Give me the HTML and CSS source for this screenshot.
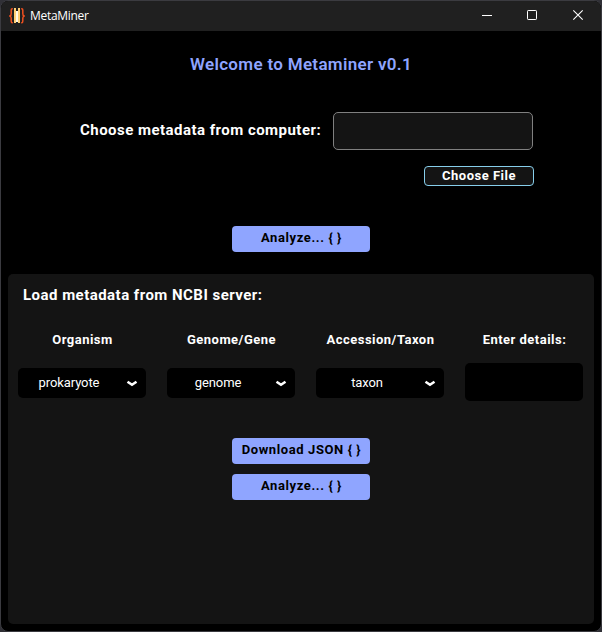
FILE: index.html
```html
<!DOCTYPE html>
<html lang="en">
<head>
<meta charset="utf-8">
<title>MetaMiner</title>
<link rel="stylesheet" href="styles.css">
</head>
<body>
<div class="window">
  <header class="titlebar">
    <svg class="logo" width="16" height="18" viewBox="0 0 16 18">
      <path d="M3.800 1.700H3.300Q2.200 1.700 2.200 3v3.500Q2.200 8.500 1 9 2.200 9.500 2.200 11.500V14q0 1.800 1.100 1.800h.5M12.200 1.700h.5Q13.800 1.700 13.800 3v3.500Q13.800 8.500 15 9 13.800 9.500 13.800 11.500V14q0 1.800-1.100 1.800h-.5" fill="none" stroke="#f0501f" stroke-width="1.500"/>
      <path d="M5 1h2v3h2V1h2v15H9v-1H7v1H5z" fill="#ffcf75"/>
      <path d="M7 4h2v11H7z" fill="#fff8e8"/>
    </svg>
    <span class="app-name">MetaMiner</span>
    <div class="controls">
      <svg width="46" height="30" viewBox="0 0 46 30"><path d="M18 14.500h10" stroke="#fff" fill="none"/></svg>
      <svg width="45" height="30" viewBox="0 0 45 30"><rect x="17.500" y="9.500" width="9" height="9" rx=".7" stroke="#fff" fill="none"/></svg>
      <svg width="46" height="30" viewBox="0 0 46 30"><path d="M18.300 9.300l9.400 9.400M27.700 9.300l-9.400 9.400" stroke="#fff" stroke-width="1.100" fill="none"/></svg>
    </div>
  </header>
  <main class="content">
    <h1 class="title"><span>Welcome to Metaminer v0.1</span></h1>
    <div class="file-row">
      <label class="heading file-label" for="file">Choose metadata from computer:</label>
      <input class="file-input" id="file" type="text">
    </div>
    <button class="choose">Choose File</button>
    <button class="action analyze-file">Analyze... { }</button>
    <section class="panel">
      <h2 class="heading panel-title">Load metadata from NCBI server:</h2>
      <div class="fields">
        <div class="field"><span class="label">Organism</span>
          <div class="select"><span class="value">prokaryote</span><svg class="chevron" width="12" height="7" viewBox="0 0 12 7"><path d="M1.500 1.700L6 4.800l4.500-3.100"/></svg></div></div>
        <div class="field"><span class="label">Genome/Gene</span>
          <div class="select"><span class="value">genome</span><svg class="chevron" width="12" height="7" viewBox="0 0 12 7"><path d="M1.500 1.700L6 4.800l4.500-3.100"/></svg></div></div>
        <div class="field"><span class="label">Accession/Taxon</span>
          <div class="select"><span class="value">taxon</span><svg class="chevron" width="12" height="7" viewBox="0 0 12 7"><path d="M1.500 1.700L6 4.800l4.500-3.100"/></svg></div></div>
        <div class="field"><label class="label" for="details">Enter details:</label>
          <input class="details" id="details" type="text"></div>
      </div>
      <button class="action">Download JSON { }</button>
      <button class="action">Analyze... { }</button>
    </section>
  </main>
</div>
</body>
</html>
```
FILE: styles.css
```css
* { box-sizing: border-box; }
body {
  margin: 0;
  width: 602px;
  height: 632px;
  background: #303036;
  font-family: Roboto, sans-serif;
  color: #fff;
  overflow: hidden;
}
.window {
  width: 602px;
  height: 632px;
  border: 1px solid #3b3b40;
  border-radius: 8px;
  background: #000;
  overflow: hidden;
}
.titlebar {
  display: flex;
  align-items: center;
  height: 30px;
  padding-left: 8px;
  background: #202020;
}
.app-name {
  margin-left: 5px;
  font: 12px/16px "Open Sans", sans-serif;
  letter-spacing: -0.3px;
}
.controls { display: flex; margin-left: auto; }
.content { display: flex; flex-direction: column; }
.title {
  margin: 23px 0 0;
  font-size: 17px;
  line-height: 20px;
  font-weight: 600;
  letter-spacing: 0.32px;
  text-align: center;
  color: #8fa5ff;
}
.file-row { display: flex; align-items: center; margin: 38px 0 0 79px; }
.heading {
  margin: 0;
  font-size: 15px;
  line-height: 18px;
  font-weight: 700;
  letter-spacing: 0.47px;
  white-space: nowrap;
}
.file-label { width: 253px; margin-top: -2px; }
.file-input {
  width: 200px;
  height: 38px;
  border: 1px solid #808080;
  border-radius: 5px;
  background: #141414;
  color: #fff;
}
button {
  font: 700 13px/16px Roboto, sans-serif;
  letter-spacing: 0.5px;
  padding: 0;
}
.choose {
  width: 110px;
  height: 20px;
  margin: 16px 0 0 423px;
  border: 1px solid #87ceeb;
  border-radius: 4px;
  background: #141414;
  color: #fff;
}
.action {
  width: 138px;
  height: 26px;
  border: 0;
  border-radius: 4px;
  padding: 0 0 2px 1px;
  background: #8fa5ff;
  color: #000;
  letter-spacing: 0.6px;
  align-self: center;
}
.analyze-file { margin-top: 40px; }
.panel {
  display: flex;
  flex-direction: column;
  gap: 10px;
  height: 350px;
  margin: 22px 7px 0;
  padding: 12px 10px;
  border-radius: 5px;
  background: #141414;
}
.panel-title { padding-left: 5px; }
.fields {
  display: grid;
  grid-template-columns: 128px 128px 128px 118px;
  column-gap: 21px;
  margin: 18px 0 27px;
}
.field { display: grid; grid-template-rows: 31px 38px; align-items: center; }
.label {
  align-self: start;
  padding-left: 1px;
  font-size: 13px;
  line-height: 16px;
  font-weight: 700;
  letter-spacing: 0.48px;
  text-align: center;
}
.select {
  display: flex;
  align-items: center;
  height: 30px;
  margin-top: 2px;
  border-radius: 5px;
  background: #000;
}
.value { width: 102px; font-size: 13px; line-height: 16px; text-align: center; letter-spacing: -0.1px; }
.chevron { margin-left: 6px; fill: none; stroke: #fff; stroke-width: 2.5; stroke-linecap: butt; }
.details {
  width: 118px;
  height: 38px;
  border: 0;
  border-radius: 5px;
  background: #000;
  color: #fff;
}
```
